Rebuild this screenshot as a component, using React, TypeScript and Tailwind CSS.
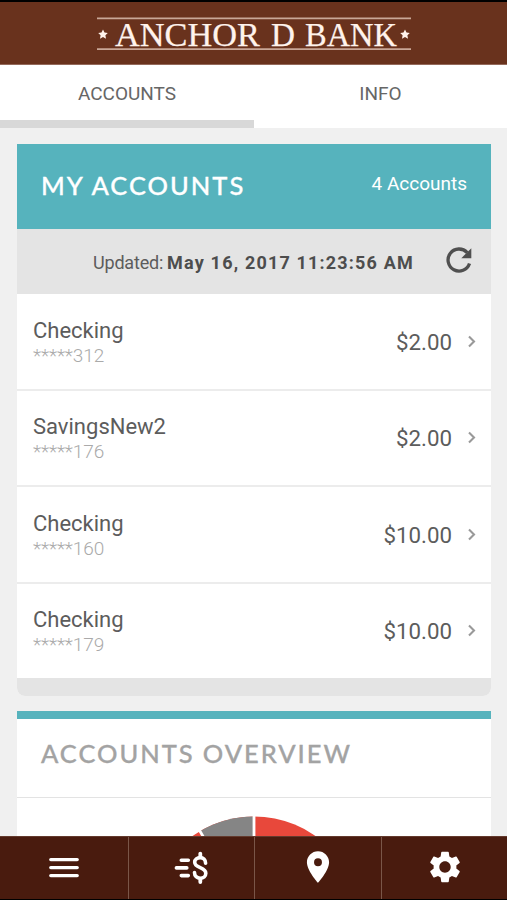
import { MdLocationOn, MdSettings } from "react-icons/md";

const accounts = [
  { name: "Checking", mask: "*****312", balance: "$2.00" },
  { name: "SavingsNew2", mask: "*****176", balance: "$2.00" },
  { name: "Checking", mask: "*****160", balance: "$10.00" },
  { name: "Checking", mask: "*****179", balance: "$10.00" },
];

function Logo() {
  const star = "M0 -4.8 1.5 -1.7 4.8 -1.2 2.4 1.1 3 4.5 0 2.9 -3 4.5 -2.4 1.1 -4.8 -1.2 -1.5 -1.7Z";
  return (
    <svg width="314" height="36" viewBox="0 0 314 36" className="block">
      <path d="M0 2.3H314M0 33.2H314" stroke="#c9a797" strokeWidth="1.8" />
      <path d={star} fill="#fff3ec" transform="translate(6 18.2)" />
      <path d={star} fill="#fff3ec" transform="translate(308 18.2)" />
      <g fill="#fff3ec" stroke="#fff3ec" strokeWidth="0.25" fontSize="34.5" className="font-['Liberation_Serif',serif]">
        <text x="18" y="29.8" textLength="145" lengthAdjust="spacingAndGlyphs">ANCHOR</text>
        <text x="174" y="29.8" textLength="24" lengthAdjust="spacingAndGlyphs">D</text>
        <text x="208" y="29.8" textLength="92" lengthAdjust="spacingAndGlyphs">BANK</text>
      </g>
    </svg>
  );
}

function OverviewChart() {
  return (
    <svg width="216" height="214" viewBox="-108 -107 216 214" className="block shrink-0">
      <circle r="106.5" fill="#e8483b" />
      <path d="M0 0V-106.5A106.5 106.5 0 0 0 -54 -91.8Z" fill="#858585" />
      <path d="M0 0V-107M0 0L-55 -93.5" stroke="#fff" strokeWidth="2.8" />
    </svg>
  );
}

function RefreshIcon() {
  return (
    <svg width="28" height="28" viewBox="0 0 28 28" className="block">
      <path d="M22.2 6.6A11 11 0 1 0 24.5 17.5" fill="none" stroke="#505050" strokeWidth="3.3" />
      <path d="M26.3 2.2V12.2H16.3Z" fill="#505050" />
    </svg>
  );
}

function MenuIcon() {
  return (
    <svg width="30" height="24" viewBox="0 0 30 24">
      <path d="M1.8 3.6H28.2M1.8 11.6H28.2M1.8 19.6H28.2" stroke="#fff" strokeWidth="3.4" strokeLinecap="round" />
    </svg>
  );
}

function TransferIcon() {
  return (
    <svg width="36" height="36" viewBox="0 0 36 36" fill="none" stroke="#fff" strokeLinecap="round">
      <path d="M7.3 10.3H14.3M2.4 17.9H12.8M7.3 25.6H14.3" strokeWidth="3.6" />
      <path
        d="M31.6 13.2C31.6 9.6 29.1 7.6 26.3 7.6C23.1 7.6 20.7 9.4 20.7 12.2C20.7 18.4 31.8 16.9 31.8 23.2C31.8 26.3 29.4 28.2 26.3 28.2C23 28.2 20.5 26.2 20.5 22.6"
        strokeWidth="3.6"
      />
      <path d="M26.3 3.6V7M26.3 29V32" strokeWidth="3.8" />
    </svg>
  );
}

function Chevron() {
  return (
    <svg width="8" height="13" viewBox="0 0 8 13" fill="none">
      <path d="M1 1.5 6 6.5 1 11.5" stroke="#999" strokeWidth="2.1" />
    </svg>
  );
}

export default function App() {
  return (
    <div className="flex h-[900px] w-[507px] flex-col overflow-hidden bg-[#f0f0f0] font-[Roboto,sans-serif] text-[#5c5c5c]">
      <header className="flex h-[65px] shrink-0 justify-center border-t-2 border-b border-t-black border-b-[#94695a] bg-[#69321d] pt-[14px]">
        <Logo />
      </header>

      <nav className="flex h-[63px] shrink-0 bg-white text-[19px] leading-[57px] text-[#666]">
        <div className="w-[254px] border-b-8 border-[#d8d8d8] text-center">ACCOUNTS</div>
        <div className="flex-1 text-center">INFO</div>
      </nav>

      <main className="min-h-0 flex-1 overflow-hidden px-4 pt-4 pl-[17px]">
        <section className="overflow-hidden rounded-b-lg bg-white">
          <div className="flex h-[85px] justify-between bg-[#56b3bd] px-6 text-white">
            <h1 className="font-[Lato,sans-serif] text-[25.5px] leading-[83px] font-medium tracking-[2px] [-webkit-text-stroke:0.3px_currentColor]">
              MY ACCOUNTS
            </h1>
            <span className="text-[19px] leading-[79px]">4 Accounts</span>
          </div>
          <div className="flex h-[65px] items-center justify-end bg-[#e4e4e4] pr-[17px]">
            <span className="pt-0.5 text-[18px] tracking-[-0.2px]">Updated:</span>
            <span className="ml-1 pt-0.5 text-[18px] font-bold tracking-[1.18px] text-[#4d4d4d]">May 16, 2017 11:23:56 AM</span>
            <span className="mr-px mb-[3px] ml-[31px]">
              <RefreshIcon />
            </span>
          </div>
          {accounts.map((a) => (
            <div
              key={a.mask}
              className="flex h-[96.5px] items-center border-b-2 border-[#ececec] pr-[15px] pl-4 nth-last-2:h-[94.5px] nth-last-2:border-b-0"
            >
              <div className="flex-1 pt-0.5">
                <div className="text-[22px] leading-[26px]">{a.name}</div>
                <div className="text-[19px] leading-[23px] font-light tracking-[-0.1px] text-[#aaa]">{a.mask}</div>
              </div>
              <span className="mr-4 pt-0.5 text-[22.3px]">{a.balance}</span>
              <Chevron />
            </div>
          ))}
          <footer className="h-[18px] bg-[#e4e4e4]" />
        </section>

        <section className="mt-[15px] border-t-8 border-[#56b3bd] bg-white">
          <h2 className="h-[79px] border-b border-[#e3e3e3] pl-6 font-[Lato,sans-serif] text-[25.5px] leading-[69px] font-medium tracking-[1.95px] text-[#a3a3a3] [-webkit-text-stroke:0.3px_currentColor]">
            ACCOUNTS OVERVIEW
          </h2>
          <div className="flex justify-center pt-[18px]">
            <OverviewChart />
          </div>
        </section>
      </main>

      <nav className="grid h-16 shrink-0 grid-cols-[129px_126px_127px_125px] divide-x divide-[#7a5648] border-t border-b border-t-[#633a2d] border-b-black bg-[#491b0e] text-white">
        <div className="flex items-center justify-center"><MenuIcon /></div>
        <div className="flex items-center justify-center"><TransferIcon /></div>
        <div className="flex items-center justify-center pb-0.5"><MdLocationOn className="size-[38px]" /></div>
        <div className="flex items-center justify-center pb-0.5"><MdSettings className="size-[38px]" /></div>
      </nav>
    </div>
  );
}
